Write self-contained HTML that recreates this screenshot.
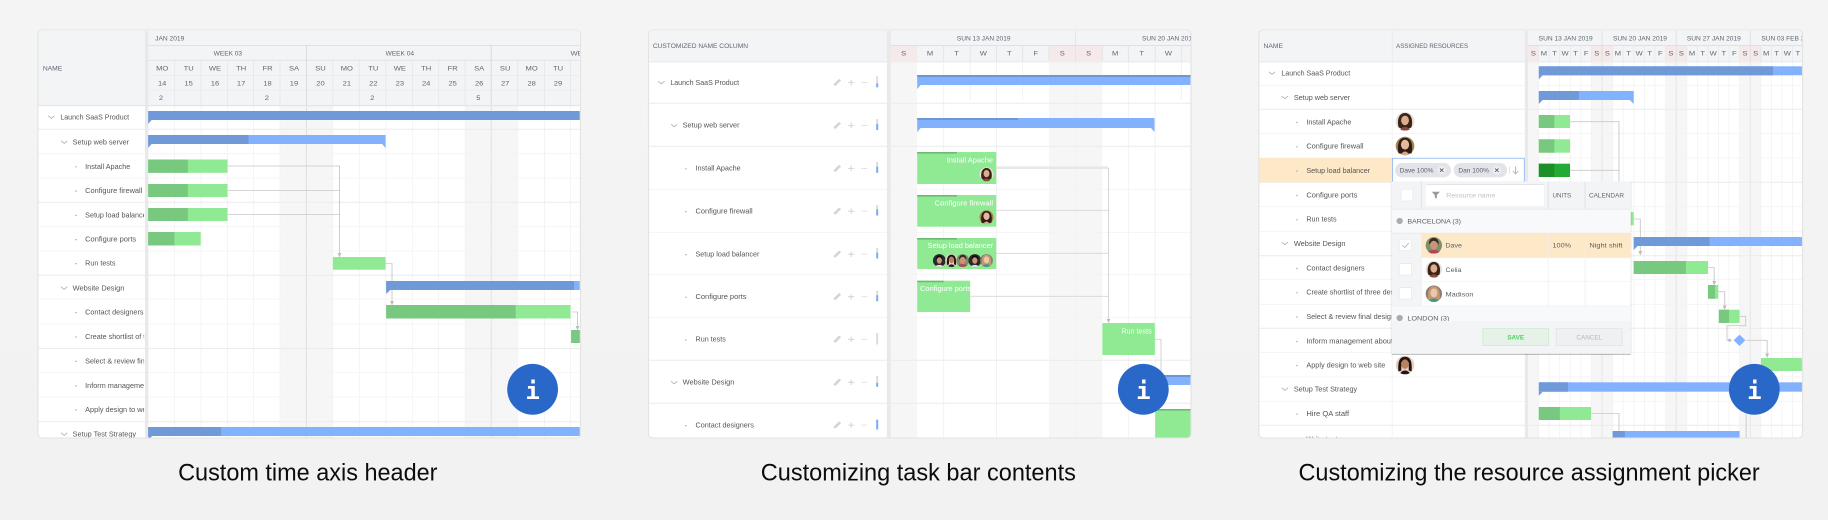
<!DOCTYPE html>
<html lang="en">
<head>
<meta charset="utf-8">
<title>Gantt customization examples</title>
<style>
html,body{margin:0;padding:0;width:1828px;height:520px;background:#f2f2f2;overflow:hidden}
svg{display:block}
text{font-family:"Liberation Sans",sans-serif}
.t{font-size:7.2px;fill:#555}
.h{font-size:6.5px;fill:#5f6672}
.w{font-size:7.4px;fill:#fff}
.p{font-size:6.8px;fill:#5a5f66}
.c{font-size:24px;fill:#0c0c0c}
.i{font-family:"DejaVu Sans Mono",monospace;font-weight:bold;font-size:24px;fill:#fff}
.m{text-anchor:middle}
</style>
</head>
<body>
<svg width="1828" height="520" viewBox="0 0 1828 520" xmlns="http://www.w3.org/2000/svg">
<defs>
<linearGradient id="bg" x1="0" y1="0" x2="0" y2="1"><stop offset="0" stop-color="#f4f4f5"/><stop offset="1" stop-color="#f2f2f2"/></linearGradient>
<filter id="b" x="0" y="0" width="1828" height="520" filterUnits="userSpaceOnUse"><feGaussianBlur stdDeviation="0.3"/></filter>
<clipPath id="c1"><rect x="33" y="31" width="464" height="406.5" rx="3"/></clipPath>
<clipPath id="c2"><rect x="643.5" y="31" width="464" height="406.5" rx="3"/></clipPath>
<clipPath id="c3"><rect x="1253.5" y="31" width="465" height="406.5" rx="3"/></clipPath>
<clipPath id="l1"><rect x="33" y="105" width="90.5" height="333"/></clipPath>
<clipPath id="pk"><rect x="1367" y="306" width="205" height="15"/></clipPath>
<clipPath id="pt"><rect x="873" y="280" width="45.7" height="33"/></clipPath>
<g id="a1"><circle r="10" fill="#e6e1dc"/><path d="M-7 6C-9-2-6-9 0-9S9-2 7 6C5 9-5 9-7 6Z" fill="#3c2418"/><ellipse cy="-1" rx="4.2" ry="5.2" fill="#dcae90"/><path d="M-5 9C-3 5 3 5 5 9L2 10H-2Z" fill="#8a4a3a"/></g>
<g id="a2"><circle r="10" fill="#a8834e"/><path d="M-7 8C-9-3-6-9 0-9S9-3 7 8Z" fill="#2e1c14"/><ellipse cy="-1.5" rx="4.4" ry="5.4" fill="#e4b89c"/><path d="M-4 9C-2 5 2 5 4 9L1 10H-1Z" fill="#d8a890"/></g>
<g id="a3"><circle r="10" fill="#7f8f68"/><path d="M-6-1C-6-7-3-9 0-9S6-7 6-1L4-3H-4Z" fill="#3a2a20"/><ellipse cy="0" rx="4.6" ry="5.6" fill="#c69676"/><path d="M-7 8C-4 5 4 5 7 8L3 10H-3Z" fill="#b84058"/></g>
<g id="a4"><circle r="10" fill="#8a7c74"/><path d="M-7 7C-8-3-6-9 0-9S8-3 7 7Z" fill="#c6996e"/><ellipse cy="-1" rx="4.2" ry="5.4" fill="#ecc6ae"/><path d="M-6 8C-3 5 3 5 6 8L3 10H-3Z" fill="#3f9a86"/></g>
<g id="a5"><circle r="10" fill="#eccfc8"/><path d="M-7 7C-8-3-6-9 0-9S8-3 7 7L4 6V-3H-4V6Z" fill="#1d1210"/><ellipse cy="-1" rx="4" ry="5.2" fill="#b98062"/><path d="M-5 9C-3 5 3 5 5 9L2 10H-2Z" fill="#20161a"/></g>
<g id="a6"><circle r="10" fill="#2a2a2c"/><path d="M-5-2C-5-7-2-8 0-8S5-7 5-2Z" fill="#111"/><ellipse cy="0" rx="4" ry="5" fill="#c89878"/><path d="M-6 9C-3 6 3 6 6 9L3 10H-3Z" fill="#e8e8e8"/></g>
</defs>
<rect width="1828" height="520" fill="url(#bg)"/>

<!-- PANEL 1 -->
<g transform="scale(1.1667 1)">
<g filter="url(#b)">
<rect x="32.5" y="30" width="465" height="408" rx="4" fill="#fff" stroke="#e3e3e3"/>
<g clip-path="url(#c1)">
<rect x="240" y="105" width="45.3" height="333" fill="#f6f6f6"/>
<rect x="398.7" y="105" width="45" height="333" fill="#f6f6f6"/>
<path d="M149.7 105V438M172.3 105V438M195 105V438M217.3 105V438M240 105V438M285.3 105V438M308 105V438M330.7 105V438M353.7 105V438M376 105V438M398.7 105V438M443.7 105V438M466.7 105V438M489 105V438" stroke="#f3f3f3" stroke-width=".8"/>
<path d="M262.7 105V438M421 105V438" stroke="#dfdfdf" stroke-width=".8"/>
<path d="M33 153.7H497M33 178H497M33 226.5H497M33 251H497M33 299H497M33 324H497M33 372.5H497M33 397H497" stroke="#f3f3f3" stroke-width=".8"/>
<path d="M33 129.3H497M33 202.3H497M33 275.3H497M33 348.5H497M33 421.7H497" stroke="#ebebeb" stroke-width="1"/>
<rect x="33" y="30" width="464" height="75.5" fill="#f3f4f6"/>
<path d="M127 45.5H497M127 60.3H497" stroke="#dfe1e5" stroke-width=".9"/>
<path d="M127 75.3H497M127 90H497" stroke="#e9ebee" stroke-width=".7"/>
<path d="M149.7 60V105M172.3 60V105M195 60V105M217.3 60V105M240 60V105M285.3 60V105M308 60V105M330.7 60V105M353.7 60V105M376 60V105M398.7 60V105M443.7 60V105M466.7 60V105M489 60V105" stroke="#e6e8ec" stroke-width=".8"/>
<path d="M262.7 45V105M421 45V105" stroke="#d9dbdf" stroke-width=".9"/>
<rect x="33" y="105" width="464" height="1.2" fill="#e4e5e7"/>
<rect x="124.3" y="30" width="2.8" height="408" fill="#e8e9eb"/>
<text class="h" x="133" y="40.5" textLength="25" lengthAdjust="spacingAndGlyphs">JAN 2019</text>
<text class="h m" x="195.3" y="55.3" textLength="24.3" lengthAdjust="spacingAndGlyphs">WEEK 03</text>
<text class="h m" x="342.7" y="55.3" textLength="24.3" lengthAdjust="spacingAndGlyphs">WEEK 04</text>
<text class="h" x="489" y="55.3">WE</text>
<text class="h" x="36.7" y="70.5" textLength="16.7" lengthAdjust="spacingAndGlyphs">NAME</text>
<text class="h m" x="139" y="70.3">MO</text><text class="h m" x="161.7" y="70.3">TU</text><text class="h m" x="184.3" y="70.3">WE</text><text class="h m" x="206.7" y="70.3">TH</text><text class="h m" x="229.3" y="70.3">FR</text><text class="h m" x="252" y="70.3">SA</text><text class="h m" x="274.7" y="70.3">SU</text><text class="h m" x="297.3" y="70.3">MO</text><text class="h m" x="320" y="70.3">TU</text><text class="h m" x="342.7" y="70.3">WE</text><text class="h m" x="365.3" y="70.3">TH</text><text class="h m" x="388" y="70.3">FR</text><text class="h m" x="410.7" y="70.3">SA</text><text class="h m" x="433" y="70.3">SU</text><text class="h m" x="455.7" y="70.3">MO</text><text class="h m" x="478.3" y="70.3">TU</text><text class="h m" x="500" y="70.3">W</text>
<text class="h m" x="139" y="85.3">14</text><text class="h m" x="161.7" y="85.3">15</text><text class="h m" x="184.3" y="85.3">16</text><text class="h m" x="206.7" y="85.3">17</text><text class="h m" x="229.3" y="85.3">18</text><text class="h m" x="252" y="85.3">19</text><text class="h m" x="274.7" y="85.3">20</text><text class="h m" x="297.3" y="85.3">21</text><text class="h m" x="320" y="85.3">22</text><text class="h m" x="342.7" y="85.3">23</text><text class="h m" x="365.3" y="85.3">24</text><text class="h m" x="388" y="85.3">25</text><text class="h m" x="410.7" y="85.3">26</text><text class="h m" x="433" y="85.3">27</text><text class="h m" x="455.7" y="85.3">28</text><text class="h m" x="478.3" y="85.3">29</text>
<text class="h m" x="138" y="100">2</text><text class="h m" x="228.7" y="100">2</text><text class="h m" x="319" y="100">2</text><text class="h m" x="410" y="100">5</text>
<path d="M195 166H291V254M195 190.5H291M195 214.5H291M330.5 263.5H336V302M490 312H495V327" fill="none" stroke="#c9c9c9" stroke-width=".8"/>
<path d="M289.3 253H292.7L291 257.5ZM334.3 301H337.7L336 305.5ZM493.3 326H496.7L495 330.5Z" fill="#bdbdbd"/>
<rect x="127" y="111" width="370" height="9" fill="#7099d8"/><path d="M127 120H130L127 124Z" fill="#7099d8"/>
<rect x="127" y="135" width="203.5" height="9" fill="#82b1fd"/><rect x="127" y="135" width="86" height="9" fill="#7099d8"/><path d="M127 144H130L127 148Z" fill="#7099d8"/><path d="M330.5 144H327.5L330.5 148Z" fill="#82b1fd"/>
<rect x="127" y="159.5" width="68" height="13.3" fill="#90ea94"/><rect x="127" y="159.5" width="34" height="13.3" fill="#79c880"/>
<rect x="127" y="184" width="68" height="13" fill="#90ea94"/><rect x="127" y="184" width="34" height="13" fill="#79c880"/>
<rect x="127" y="208" width="68" height="13" fill="#90ea94"/><rect x="127" y="208" width="34" height="13" fill="#79c880"/>
<rect x="127" y="232" width="45" height="13.5" fill="#90ea94"/><rect x="127" y="232" width="22.5" height="13.5" fill="#79c880"/>
<rect x="285.3" y="257" width="45.2" height="12.7" fill="#90ea94"/>
<rect x="331" y="281" width="166" height="9" fill="#82b1fd"/><rect x="331" y="281" width="161" height="9" fill="#7099d8"/><path d="M331 290H334.5L331 294Z" fill="#7099d8"/>
<rect x="331" y="305" width="158" height="13.5" fill="#90ea94"/><rect x="331" y="305" width="111" height="13.5" fill="#79c880"/>
<rect x="489.5" y="330" width="8" height="13" fill="#79c880"/>
<rect x="127" y="427" width="370" height="9" fill="#82b1fd"/><rect x="127" y="427" width="62.5" height="9" fill="#7099d8"/><path d="M127 436H130.5L127 440Z" fill="#7099d8"/>
<g clip-path="url(#l1)">
<text class="t" x="51.7" y="119.3" textLength="59" lengthAdjust="spacingAndGlyphs">Launch SaaS Product</text>
<text class="t" x="62.3" y="144.3" textLength="48.3" lengthAdjust="spacingAndGlyphs">Setup web server</text>
<text class="t" x="73" y="168.8" textLength="38.7" lengthAdjust="spacingAndGlyphs">Install Apache</text>
<text class="t" x="73" y="193" textLength="49" lengthAdjust="spacingAndGlyphs">Configure firewall</text>
<text class="t" x="73" y="217.3" textLength="54.7" lengthAdjust="spacingAndGlyphs">Setup load balancer</text>
<text class="t" x="73" y="241.6" textLength="43.7" lengthAdjust="spacingAndGlyphs">Configure ports</text>
<text class="t" x="73" y="265.6" textLength="26" lengthAdjust="spacingAndGlyphs">Run tests</text>
<text class="t" x="62.3" y="290.3" textLength="44.3" lengthAdjust="spacingAndGlyphs">Website Design</text>
<text class="t" x="73" y="314.3" textLength="50" lengthAdjust="spacingAndGlyphs">Contact designers</text>
<text class="t" x="73" y="338.8" textLength="92" lengthAdjust="spacingAndGlyphs">Create shortlist of three designers</text>
<text class="t" x="73" y="363.3" textLength="76" lengthAdjust="spacingAndGlyphs">Select &amp; review final design</text>
<text class="t" x="73" y="387.8" textLength="73" lengthAdjust="spacingAndGlyphs">Inform management about</text>
<text class="t" x="73" y="411.8" textLength="67.7" lengthAdjust="spacingAndGlyphs">Apply design to web site</text>
<text class="t" x="62.3" y="436.3" textLength="54.3" lengthAdjust="spacingAndGlyphs">Setup Test Strategy</text>
</g>
<path d="M41.3 115.7L44 118.4L46.7 115.7M52.3 140.7L55 143.4L57.7 140.7M52.3 286.7L55 289.4L57.7 286.7M52.3 432.7L55 435.4L57.7 432.7" fill="none" stroke="#a8a8a8" stroke-width=".7"/>
<path d="M64.4 166.2h1.2v1.2h-1.2zM64.4 190.5h1.2v1.2h-1.2zM64.4 214.8h1.2v1.2h-1.2zM64.4 239h1.2v1.2h-1.2zM64.4 263h1.2v1.2h-1.2zM64.4 312h1.2v1.2h-1.2zM64.4 336.4h1.2v1.2h-1.2zM64.4 360.8h1.2v1.2h-1.2zM64.4 385.3h1.2v1.2h-1.2zM64.4 409.3h1.2v1.2h-1.2z" fill="#aaa"/>
</g>
</g>
</g>

<!-- PANEL 2 -->
<g transform="translate(610 0) scale(1.1667 1) translate(-610 0)">
<g filter="url(#b)">
<rect x="643" y="30" width="465" height="408" rx="4" fill="#fff" stroke="#e3e3e3"/>
<g clip-path="url(#c2)">
<rect x="850.7" y="61" width="22.6" height="377" fill="#f6f6f6"/>
<rect x="986.3" y="61" width="45.7" height="377" fill="#f6f6f6"/>
<path d="M896 61V438M941.3 61V438M1077.3 61V438M1054.3 61V438M918.7 61V100M963.7 61V100M1099.7 61V100M1009 61V438" stroke="#f1f1f1" stroke-width=".8"/>
<path d="M643.5 189.3H1108M643.5 232.3H1108M643.5 274.3H1108M643.5 317.3H1108" stroke="#f3f3f3" stroke-width=".8"/>
<path d="M643.5 103.3H1108M643.5 146.3H1108M643.5 360.3H1108M643.5 403.3H1108" stroke="#ebebeb" stroke-width="1"/>
<rect x="643.5" y="30" width="464" height="31" fill="#f3f4f6"/>
<rect x="850.7" y="45.5" width="22.6" height="15.5" fill="#f5e9e9"/>
<rect x="986.3" y="45.5" width="45.7" height="15.5" fill="#f5e9e9"/>
<path d="M850 45.4H1108" stroke="#dcdee2" stroke-width=".9"/>
<path d="M1009 30V61M896 45V61M918.7 45V61M941.3 45V61M963.7 45V61M986.3 45V61M1032 45V61M1054.3 45V61M1077.3 45V61M1099.7 45V61" stroke="#e2e4e8" stroke-width=".8"/>
<rect x="643.5" y="61" width="464" height="1.6" fill="#eceef0"/>
<rect x="847.3" y="30" width="3.4" height="408" fill="#e8e9eb"/>
<text class="h" x="646.7" y="48.2" textLength="81.6" lengthAdjust="spacingAndGlyphs">CUSTOMIZED NAME COLUMN</text>
<text class="h m" x="930.3" y="40.5" textLength="46" lengthAdjust="spacingAndGlyphs">SUN 13 JAN 2019</text>
<text class="h" x="1066" y="40.5" textLength="46" lengthAdjust="spacingAndGlyphs">SUN 20 JAN 2019</text>
<text class="h m" x="861.7" y="55.7">S</text><text class="h m" x="884.3" y="55.7">M</text><text class="h m" x="907" y="55.7">T</text><text class="h m" x="930" y="55.7">W</text><text class="h m" x="952.3" y="55.7">T</text><text class="h m" x="975" y="55.7">F</text><text class="h m" x="997.7" y="55.7">S</text><text class="h m" x="1020.3" y="55.7">S</text><text class="h m" x="1043" y="55.7">M</text><text class="h m" x="1065.7" y="55.7">T</text><text class="h m" x="1088.7" y="55.7">W</text>
<path d="M941 168.3H1037.3V320M941 210.3H1037.3M941 253.3H1037.3M918.7 296.3H1037.3M1077 339.3H1082.3V375" fill="none" stroke="#d6d6d6" stroke-width=".9"/>
<path d="M941 167.5H1037" stroke="#e8e8e8" stroke-width="2.2"/>
<path d="M1035.6 319H1039L1037.3 323Z" fill="#bdbdbd"/>
<rect x="873.3" y="75" width="234.4" height="10" fill="#82b1fd"/><rect x="873.3" y="75" width="234.4" height="2" fill="#6d97d4"/><path d="M873.3 85H876.3L873.3 89Z" fill="#82b1fd"/>
<rect x="873.3" y="118" width="203.4" height="10" fill="#82b1fd"/><rect x="873.3" y="118" width="86.4" height="2" fill="#6d97d4"/><path d="M873.3 128H876.3L873.3 132ZM1076.7 128H1073.7L1076.7 132Z" fill="#82b1fd"/>
<rect x="873.3" y="152" width="67.7" height="32" fill="#90ea94"/><rect x="873.3" y="152" width="34" height="1.6" fill="#6cba73"/>
<rect x="873.3" y="195" width="67.7" height="31.7" fill="#90ea94"/><rect x="873.3" y="195" width="34" height="1.6" fill="#6cba73"/>
<rect x="873.3" y="238" width="67.7" height="31" fill="#90ea94"/><rect x="873.3" y="238" width="34" height="1.6" fill="#6cba73"/>
<rect x="873.3" y="280.7" width="45.4" height="31.3" fill="#90ea94"/><rect x="873.3" y="280.7" width="22.7" height="1.6" fill="#6cba73"/>
<rect x="1032" y="323" width="45" height="32" fill="#90ea94"/>
<rect x="1077" y="375" width="31" height="10" fill="#82b1fd"/><rect x="1077" y="375" width="31" height="2" fill="#6d97d4"/>
<rect x="1077.3" y="409" width="31" height="29" fill="#90ea94"/><rect x="1077.3" y="409" width="31" height="1.6" fill="#6cba73"/>
<text class="w" x="938.3" y="162.5" text-anchor="end" textLength="39.7" lengthAdjust="spacingAndGlyphs">Install Apache</text>
<text class="w" x="938.3" y="205.5" text-anchor="end" textLength="50" lengthAdjust="spacingAndGlyphs">Configure firewall</text>
<text class="w" x="938.3" y="248" text-anchor="end" textLength="56" lengthAdjust="spacingAndGlyphs">Setup load balancer</text>
<g clip-path="url(#pt)"><text class="w" x="875.7" y="291" textLength="44" lengthAdjust="spacingAndGlyphs">Configure ports</text></g>
<text class="w" x="1074.3" y="333.5" text-anchor="end" textLength="26" lengthAdjust="spacingAndGlyphs">Run tests</text>
<use href="#a1" transform="translate(932.7 174.3) scale(.6 .7)"/>
<use href="#a2" transform="translate(932.7 217.3) scale(.6 .7)"/>
<use href="#a6" transform="translate(892.3 260.5) scale(.55 .64)"/>
<use href="#a5" transform="translate(902.7 260.5) scale(.55 .64)"/>
<use href="#a3" transform="translate(912.3 260.5) scale(.55 .64)"/>
<use href="#a6" transform="translate(922.7 260.5) scale(.55 .64)"/>
<use href="#a4" transform="translate(932.7 260.5) scale(.55 .64)"/>
<text class="t" x="661.7" y="85" textLength="59" lengthAdjust="spacingAndGlyphs">Launch SaaS Product</text>
<text class="t" x="672.3" y="127.7" textLength="48.7" lengthAdjust="spacingAndGlyphs">Setup web server</text>
<text class="t" x="683.3" y="170.7" textLength="38.7" lengthAdjust="spacingAndGlyphs">Install Apache</text>
<text class="t" x="683.3" y="213.3" textLength="49" lengthAdjust="spacingAndGlyphs">Configure firewall</text>
<text class="t" x="683.3" y="256.3" textLength="54.7" lengthAdjust="spacingAndGlyphs">Setup load balancer</text>
<text class="t" x="683.3" y="299" textLength="43.7" lengthAdjust="spacingAndGlyphs">Configure ports</text>
<text class="t" x="683.3" y="341.6" textLength="26" lengthAdjust="spacingAndGlyphs">Run tests</text>
<text class="t" x="672.3" y="384.6" textLength="44.3" lengthAdjust="spacingAndGlyphs">Website Design</text>
<text class="t" x="683.3" y="427.3" textLength="50" lengthAdjust="spacingAndGlyphs">Contact designers</text>
<path d="M651.3 81.2L654 83.9L656.7 81.2M662.3 124.2L665 126.9L667.7 124.2M662.3 381.2L665 383.9L667.7 381.2" fill="none" stroke="#a8a8a8" stroke-width=".7"/>
<path d="M674.4 168.2h1.2v1.2h-1.2zM674.4 211h1.2v1.2h-1.2zM674.4 254h1.2v1.2h-1.2zM674.4 296.7h1.2v1.2h-1.2zM674.4 339.4h1.2v1.2h-1.2zM674.4 425h1.2v1.2h-1.2z" fill="#aaa"/>
<g id="act" fill="none">
<path d="M802.3 85.3L807.2 79.6" stroke="#d4d4d4" stroke-width="2.4"/>
<path d="M814 82.5H819.4M816.7 79.8V85.2" stroke="#cfcfcf" stroke-width=".8"/>
<path d="M825.7 82.5H831" stroke="#d0d0d0" stroke-width=".9" stroke-dasharray="1 .7"/>
</g>
<use href="#act" y="43"/><use href="#act" y="86"/><use href="#act" y="128.7"/><use href="#act" y="171.7"/><use href="#act" y="214.2"/><use href="#act" y="256.8"/><use href="#act" y="299.8"/><use href="#act" y="342.6"/>
<path d="M839 76.3V87.3M839 119V130M839 162V173M839 205V216M839 248V259M839 290.7V301.7M839 333V344.5M839 376V387M839 419V430" stroke="#dcdcdc" stroke-width="1.7"/>
<path d="M839 83.5V87.3M839 124V130M839 166.7V172.7M839 209.3V215.3M839 252.7V258.3M839 295.3V301M839 382.7V386.7M839 420V429.3" stroke="#7aaefc" stroke-width="1.7"/>
</g>
</g>
</g>

<!-- PANEL 3 -->
<g transform="translate(1218 0) scale(1.1667 1) translate(-1218 0)">
<g filter="url(#b)">
<rect x="1253" y="30" width="466" height="408" rx="4" fill="#fff" stroke="#e3e3e3"/>
<g clip-path="url(#c3)">
<rect x="1483.7" y="61" width="9.1" height="377" fill="#f6f6f6"/>
<rect x="1538.1" y="61" width="18.2" height="377" fill="#f6f6f6"/>
<rect x="1601.6" y="61" width="18.2" height="377" fill="#f6f6f6"/>
<rect x="1665.1" y="61" width="18.2" height="377" fill="#f6f6f6"/>
<path d="M1492.8 61V438M1501.8 61V438M1510.9 61V438M1520 61V438M1529 61V438M1538.1 61V438M1556.3 61V438M1565.3 61V438M1574.4 61V438M1583.5 61V438M1592.5 61V438M1601.6 61V438M1619.8 61V438M1628.8 61V438M1637.9 61V438M1647 61V438M1656 61V438M1665.1 61V438M1683.3 61V438M1692.3 61V438M1701.4 61V438M1710.5 61V438" stroke="#f2f2f2" stroke-width=".7"/>
<path d="M1547.2 61V438M1610.7 61V438M1674.2 61V438" stroke="#e4e4e4" stroke-width=".8"/>
<path d="M1367.3 61V438" stroke="#f3f3f3" stroke-width=".8"/>
<path d="M1253.5 85.3H1719M1253.5 133.3H1719M1253.5 158H1719M1253.5 206.7H1719M1253.5 231.3H1719M1253.5 279.3H1719M1253.5 304.3H1719M1253.5 352.3H1719M1253.5 377H1719M1253.5 401.3H1719" stroke="#f3f3f3" stroke-width=".8"/>
<path d="M1253.5 109.3H1719M1253.5 182.3H1719M1253.5 255.7H1719M1253.5 328.3H1719M1253.5 425.3H1719" stroke="#ebebeb" stroke-width="1"/>
<rect x="1253.5" y="30" width="465.5" height="31" fill="#f3f4f6"/>
<rect x="1483.7" y="45.5" width="9.1" height="15.5" fill="#f5e9e9"/><rect x="1538.1" y="45.5" width="18.2" height="15.5" fill="#f5e9e9"/><rect x="1601.6" y="45.5" width="18.2" height="15.5" fill="#f5e9e9"/><rect x="1665.1" y="45.5" width="18.2" height="15.5" fill="#f5e9e9"/>
<path d="M1483 45.4H1719" stroke="#dcdee2" stroke-width=".9"/>
<path d="M1547.2 30V61M1610.7 30V61M1674.2 30V61" stroke="#dcdee2" stroke-width=".8"/>
<path d="M1367.3 30V61M1492.8 45V61M1501.8 45V61M1510.9 45V61M1520 45V61M1529 45V61M1538.1 45V61M1556.3 45V61M1565.3 45V61M1574.4 45V61M1583.5 45V61M1592.5 45V61M1601.6 45V61M1619.8 45V61M1628.8 45V61M1637.9 45V61M1647 45V61M1656 45V61M1665.1 45V61M1683.3 45V61M1692.3 45V61M1701.4 45V61M1710.5 45V61" stroke="#e6e8ec" stroke-width=".7"/>
<rect x="1253.5" y="61" width="465.5" height="1.6" fill="#eceef0"/>
<rect x="1481" y="30" width="2.7" height="408" fill="#e8e9eb"/>
<text class="h" x="1257" y="48.2" textLength="16.7" lengthAdjust="spacingAndGlyphs">NAME</text>
<text class="h" x="1370.7" y="48.2" textLength="61.6" lengthAdjust="spacingAndGlyphs">ASSIGNED RESOURCES</text>
<text class="h m" x="1516" y="40.5" textLength="46.3" lengthAdjust="spacingAndGlyphs">SUN 13 JAN 2019</text>
<text class="h m" x="1579.7" y="40.5" textLength="46.3" lengthAdjust="spacingAndGlyphs">SUN 20 JAN 2019</text>
<text class="h m" x="1643" y="40.5" textLength="46.3" lengthAdjust="spacingAndGlyphs">SUN 27 JAN 2019</text>
<text class="h" x="1683.7" y="40.5" textLength="46.3" lengthAdjust="spacingAndGlyphs">SUN 03 FEB 2019</text>
<text class="h m" x="1488.3" y="55.7">S</text><text class="h m" x="1497.3" y="55.7">M</text><text class="h m" x="1506.4" y="55.7">T</text><text class="h m" x="1515.5" y="55.7">W</text><text class="h m" x="1524.5" y="55.7">T</text><text class="h m" x="1533.6" y="55.7">F</text><text class="h m" x="1542.7" y="55.7">S</text><text class="h m" x="1551.8" y="55.7">S</text><text class="h m" x="1560.8" y="55.7">M</text><text class="h m" x="1569.9" y="55.7">T</text><text class="h m" x="1579" y="55.7">W</text><text class="h m" x="1588" y="55.7">T</text><text class="h m" x="1597.1" y="55.7">F</text><text class="h m" x="1606.2" y="55.7">S</text><text class="h m" x="1615.2" y="55.7">S</text><text class="h m" x="1624.3" y="55.7">M</text><text class="h m" x="1633.4" y="55.7">T</text><text class="h m" x="1642.5" y="55.7">W</text><text class="h m" x="1651.5" y="55.7">T</text><text class="h m" x="1660.6" y="55.7">F</text><text class="h m" x="1669.7" y="55.7">S</text><text class="h m" x="1678.8" y="55.7">S</text><text class="h m" x="1687.8" y="55.7">M</text><text class="h m" x="1696.9" y="55.7">T</text><text class="h m" x="1706" y="55.7">W</text><text class="h m" x="1715" y="55.7">T</text>
<rect x="1253.5" y="158" width="113.8" height="24.3" fill="#fde8c8"/>
<path d="M1520 121.7H1561.7V182M1520 170.3H1561.7M1574.3 219H1580V252M1638 267.5H1643.3V282M1646.7 291.7H1652.3V306M1665 316.3H1670.3V325.7H1654.3V340.3H1658M1671 340.3H1688.7V355M1538 413.5H1561.7V431M1670.7 414V438" fill="none" stroke="#c9c9c9" stroke-width=".8"/>
<path d="M1578.3 251H1581.7L1580 255.5ZM1641.6 281H1645L1643.3 285.5ZM1650.6 305.5H1654L1652.3 310ZM1687 353.5H1690.4L1688.7 358Z" fill="#bdbdbd"/>
<circle cx="1656.5" cy="340.3" r="1.4" fill="#bdbdbd"/>
<rect x="1493" y="66.3" width="226" height="9" fill="#82b1fd"/><rect x="1493" y="66.3" width="200.7" height="9" fill="#7099d8"/><path d="M1493 75.3H1496.3L1493 79.3Z" fill="#7099d8"/>
<rect x="1493" y="91" width="81.3" height="9" fill="#82b1fd"/><rect x="1493" y="91" width="34.3" height="9" fill="#7099d8"/><path d="M1493 100H1496.3L1493 104Z" fill="#7099d8"/><path d="M1574.3 100H1571L1574.3 104Z" fill="#82b1fd"/>
<rect x="1493" y="115" width="26.7" height="13" fill="#90ea94"/><rect x="1493" y="115" width="13.3" height="13" fill="#79c880"/>
<rect x="1493" y="139.3" width="26.7" height="13.4" fill="#90ea94"/><rect x="1493" y="139.3" width="13.3" height="13.4" fill="#79c880"/>
<rect x="1493" y="163.7" width="26.7" height="13.3" fill="#22ac34"/><rect x="1493" y="163.7" width="13.3" height="13.3" fill="#1c9028"/>
<rect x="1560" y="212" width="14.3" height="13.3" fill="#90ea94"/>
<rect x="1574.3" y="237" width="144.7" height="9" fill="#82b1fd"/><rect x="1574.3" y="237" width="65" height="9" fill="#7099d8"/><path d="M1574.3 246H1577.6L1574.3 250Z" fill="#7099d8"/>
<rect x="1574.3" y="261" width="63.7" height="13" fill="#90ea94"/><rect x="1574.3" y="261" width="44.7" height="13" fill="#79c880"/>
<rect x="1638" y="285" width="8.7" height="13.7" fill="#90ea94"/><rect x="1638" y="285" width="6" height="13.7" fill="#79c880"/>
<rect x="1647.3" y="309.7" width="17.7" height="13.3" fill="#90ea94"/><rect x="1647.3" y="309.7" width="8.7" height="13.3" fill="#79c880"/>
<path d="M1665 334.6L1670 340.3L1665 346L1660 340.3Z" fill="#82b1fd"/>
<rect x="1683.3" y="358" width="36" height="13" fill="#90ea94"/>
<rect x="1493" y="382.3" width="226" height="9.4" fill="#82b1fd"/><rect x="1493" y="382.3" width="25" height="9.4" fill="#7099d8"/><path d="M1493 391.7H1496.3L1493 395.7Z" fill="#7099d8"/>
<rect x="1493" y="407" width="44.7" height="13" fill="#90ea94"/><rect x="1493" y="407" width="18" height="13" fill="#79c880"/>
<rect x="1556.3" y="431" width="108.7" height="9" fill="#82b1fd"/><rect x="1556.3" y="431" width="10.4" height="9" fill="#7099d8"/>
<text class="t" x="1272.3" y="75.6" textLength="59" lengthAdjust="spacingAndGlyphs">Launch SaaS Product</text>
<text class="t" x="1283" y="100" textLength="48.3" lengthAdjust="spacingAndGlyphs">Setup web server</text>
<text class="t" x="1293.7" y="124.3" textLength="38.7" lengthAdjust="spacingAndGlyphs">Install Apache</text>
<text class="t" x="1293.7" y="148.6" textLength="49" lengthAdjust="spacingAndGlyphs">Configure firewall</text>
<text class="t" x="1293.7" y="172.8" textLength="54.7" lengthAdjust="spacingAndGlyphs">Setup load balancer</text>
<text class="t" x="1293.7" y="197.3" textLength="43.7" lengthAdjust="spacingAndGlyphs">Configure ports</text>
<text class="t" x="1293.7" y="221.6" textLength="26" lengthAdjust="spacingAndGlyphs">Run tests</text>
<text class="t" x="1283" y="245.8" textLength="44.3" lengthAdjust="spacingAndGlyphs">Website Design</text>
<text class="t" x="1293.7" y="270.3" textLength="50" lengthAdjust="spacingAndGlyphs">Contact designers</text>
<text class="t" x="1293.7" y="294.6" textLength="92" lengthAdjust="spacingAndGlyphs">Create shortlist of three designers</text>
<text class="t" x="1293.7" y="318.8" textLength="76" lengthAdjust="spacingAndGlyphs">Select &amp; review final design</text>
<text class="t" x="1293.7" y="343.3" textLength="88" lengthAdjust="spacingAndGlyphs">Inform management about plan</text>
<text class="t" x="1293.7" y="367.3" textLength="67.7" lengthAdjust="spacingAndGlyphs">Apply design to web site</text>
<text class="t" x="1283" y="391.6" textLength="54.3" lengthAdjust="spacingAndGlyphs">Setup Test Strategy</text>
<text class="t" x="1293.7" y="416" textLength="36.7" lengthAdjust="spacingAndGlyphs">Hire QA staff</text>
<text class="t" x="1293.7" y="441.5" textLength="45" lengthAdjust="spacingAndGlyphs">Write test cases</text>
<path d="M1261.6 71.7L1264.3 74.4L1267 71.7M1272.6 96L1275.3 98.7L1278 96M1272.6 242L1275.3 244.7L1278 242M1272.6 387.7L1275.3 390.4L1278 387.7" fill="none" stroke="#a8a8a8" stroke-width=".7"/>
<path d="M1285.1 121.9h1.2v1.2h-1.2zM1285.1 146.2h1.2v1.2h-1.2zM1285.1 170.4h1.2v1.2h-1.2zM1285.1 194.9h1.2v1.2h-1.2zM1285.1 219.2h1.2v1.2h-1.2zM1285.1 267.9h1.2v1.2h-1.2zM1285.1 292.2h1.2v1.2h-1.2zM1285.1 316.4h1.2v1.2h-1.2zM1285.1 340.9h1.2v1.2h-1.2zM1285.1 364.9h1.2v1.2h-1.2zM1285.1 413.6h1.2v1.2h-1.2z" fill="#aaa"/>
<use href="#a1" transform="translate(1378.3 121.3) scale(.8 .92)"/>
<use href="#a2" transform="translate(1378.3 146) scale(.8 .92)"/>
<use href="#a5" transform="translate(1378.3 365) scale(.8 .92)"/>
<rect x="1367.6" y="158.3" width="113" height="23.7" fill="#fff" stroke="#9fc0f2" stroke-width=".9"/>
<rect x="1369.7" y="163" width="48" height="14.3" rx="6" ry="7" fill="#e2e4ea"/>
<rect x="1420" y="163" width="45.7" height="14.3" rx="6" ry="7" fill="#e2e4ea"/>
<text class="p" x="1373.7" y="172.5" textLength="29" lengthAdjust="spacingAndGlyphs">Dave 100%</text>
<text class="p" x="1424" y="172.5" textLength="26.3" lengthAdjust="spacingAndGlyphs">Dan 100%</text>
<ellipse cx="1409.7" cy="170.2" rx="3.5" ry="4" fill="#eff0f4"/><ellipse cx="1457" cy="170.2" rx="3.5" ry="4" fill="#eff0f4"/>
<path d="M1408.2 168.5L1411.2 171.9M1411.2 168.5L1408.2 171.9M1455.5 168.5L1458.5 171.9M1458.5 168.5L1455.5 171.9" stroke="#555" stroke-width=".8"/>
<path d="M1468 166.5V173.5" stroke="#d4d6da" stroke-width=".6"/>
<path d="M1473 166.5V174M1470.6 171L1473 174L1475.4 171" fill="none" stroke="#aeb2b8" stroke-width=".8"/>
</g>
</g>
<g filter="url(#b)">
<rect x="1367" y="183" width="204.7" height="172" fill="#000" fill-opacity=".22"/>
<rect x="1366" y="182" width="206.7" height="172.5" fill="#000" fill-opacity=".06"/>
<rect x="1367" y="181.7" width="204.7" height="172" fill="#fff"/>
<rect x="1367" y="181.7" width="204.7" height="27.3" fill="#f3f4f6"/>
<rect x="1367" y="209" width="204.7" height="24.3" fill="#f8f9fb"/>
<rect x="1367" y="233.3" width="25.3" height="72.7" fill="#f3f4f6"/>
<rect x="1392.3" y="233.3" width="179.4" height="24.4" fill="#fde8c8"/>
<rect x="1367" y="306" width="204.7" height="15" fill="#f8f9fb"/>
<path d="M1392.3 181.7V209M1501 181.7V209M1532.7 181.7V209" stroke="#e2e4e8" stroke-width=".9"/>
<path d="M1392.3 233V306M1501 233V306M1532.7 233V306" stroke="#eeeff1" stroke-width=".7"/>
<path d="M1367 209.2H1571.7M1367 233.3H1571.7" stroke="#e6e8ec" stroke-width=".9"/>
<path d="M1367 257.7H1571.7M1367 281.7H1571.7M1367 306H1571.7" stroke="#eff0f2" stroke-width=".7"/>
<rect x="1375" y="189.3" width="10" height="11.7" fill="#fff" stroke="#e6e8ec" stroke-width=".6"/>
<rect x="1396" y="184.3" width="101.3" height="21.4" fill="#fff"/>
<path d="M1396 184.6H1497.3" stroke="#dfe1e5" stroke-width=".9"/>
<path d="M1401.2 191.7H1408.2L1405.6 195V198.6L1403.8 197.6V195Z" fill="#9a9a9a"/>
<text x="1413.7" y="197.3" font-size="6.6" fill="#bdbfc3" textLength="42" lengthAdjust="spacingAndGlyphs">Resource name</text>
<text class="h" x="1504.7" y="197.7" textLength="16" lengthAdjust="spacingAndGlyphs">UNITS</text>
<text class="h" x="1536" y="197.7" textLength="30" lengthAdjust="spacingAndGlyphs">CALENDAR</text>
<ellipse cx="1373.7" cy="221" rx="2.7" ry="3.1" fill="#aaacb0"/>
<text class="p" x="1380.3" y="223.3" textLength="46" lengthAdjust="spacingAndGlyphs">BARCELONA (3)</text>
<rect x="1373.3" y="239.3" width="10.7" height="11.4" fill="#fff" stroke="#e4e5e8" stroke-width=".6"/>
<path d="M1376 245.2L1378.2 247.5L1381.5 243" fill="none" stroke="#b0b0b0" stroke-width=".7"/>
<rect x="1373.3" y="263.7" width="10.7" height="11.4" fill="#fff" stroke="#e4e5e8" stroke-width=".6"/>
<rect x="1373.3" y="287.7" width="10.7" height="11.4" fill="#fff" stroke="#e4e5e8" stroke-width=".6"/>
<use href="#a3" transform="translate(1403 245.3) scale(.7 .82)"/>
<use href="#a1" transform="translate(1403 269.3) scale(.7 .82)"/>
<use href="#a4" transform="translate(1403 293.7) scale(.7 .82)"/>
<text class="p" x="1413" y="247.7" textLength="14" lengthAdjust="spacingAndGlyphs">Dave</text>
<text class="p" x="1504.7" y="247.7" textLength="16" lengthAdjust="spacingAndGlyphs">100%</text>
<text class="p" x="1536.3" y="247.7" textLength="28.4" lengthAdjust="spacingAndGlyphs">Night shift</text>
<text class="p" x="1413" y="272" textLength="13.7" lengthAdjust="spacingAndGlyphs">Celia</text>
<text class="p" x="1413" y="296.3" textLength="24" lengthAdjust="spacingAndGlyphs">Madison</text>
<g clip-path="url(#pk)">
<ellipse cx="1373.7" cy="318" rx="2.7" ry="3.1" fill="#aaacb0"/>
<text class="p" x="1380.3" y="320.6" textLength="36" lengthAdjust="spacingAndGlyphs">LONDON (3)</text>
</g>
<rect x="1367" y="321" width="204.7" height="32.7" fill="#f3f4f6"/>
<rect x="1445" y="328.6" width="56.4" height="17" fill="#e6f2e8" stroke="#c8eccd" stroke-width=".7"/>
<rect x="1508" y="328.6" width="56.4" height="17" fill="#eef0f2" stroke="#e0e2e6" stroke-width=".7"/>
<text class="m" x="1473.2" y="339.5" font-size="6" font-weight="bold" fill="#4cd060" textLength="14.4" lengthAdjust="spacingAndGlyphs">SAVE</text>
<text class="m" x="1536.2" y="339.5" font-size="6" fill="#b4b8bc" textLength="22" lengthAdjust="spacingAndGlyphs">CANCEL</text>
</g>
</g>

<!-- info badges -->
<circle cx="532.6" cy="389.3" r="25.4" fill="#2968c8"/>
<text class="i m" x="532.6" y="399">i</text>
<circle cx="1143.3" cy="389.3" r="25.4" fill="#2968c8"/>
<text class="i m" x="1143.3" y="399">i</text>
<circle cx="1754.3" cy="389.3" r="25.4" fill="#2968c8"/>
<text class="i m" x="1754.3" y="399">i</text>

<!-- captions -->
<text class="c" x="178.1" y="480.5" textLength="259.4" lengthAdjust="spacingAndGlyphs">Custom time axis header</text>
<text class="c" x="760.8" y="480.5" textLength="315.1" lengthAdjust="spacingAndGlyphs">Customizing task bar contents</text>
<text class="c" x="1298.5" y="480.5" textLength="461.2" lengthAdjust="spacingAndGlyphs">Customizing the resource assignment picker</text>
</svg>
</body>
</html>
